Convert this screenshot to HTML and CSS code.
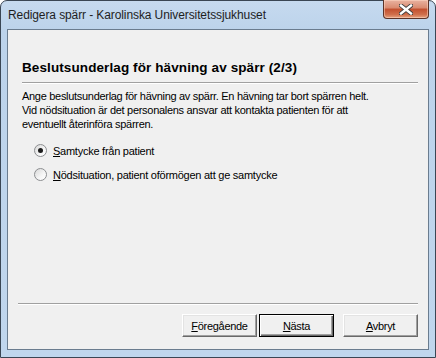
FILE: index.html
```html
<!DOCTYPE html>
<html>
<head>
  <title>Redigera spärr</title>
  <link rel="stylesheet" href="styles.css">
</head>

<body>
  <div class="window">
    <div class="titlebar">
      <span class="title">Redigera spärr - Karolinska Universitetssjukhuset</span>
      <button class="close" aria-label="Stäng">
        <svg width="14" height="11" viewBox="0 0 14 11">
          <path d="M2 1.5 L12 9.5 M12 1.5 L2 9.5" stroke="#3b3b3b" stroke-width="4.2" stroke-linecap="square"/>
          <path d="M2 1.5 L12 9.5 M12 1.5 L2 9.5" stroke="#ffffff" stroke-width="2.4" stroke-linecap="square"/>
        </svg>
      </button>
    </div>

    <div class="client">
      <div class="content">
        <h1 class="heading">Beslutsunderlag för hävning av spärr (2/3)</h1>
        <div class="rule"></div>
        <p class="intro">
          Ange beslutsunderlag för hävning av spärr. En hävning tar bort spärren helt.<br>
          Vid nödsituation är det personalens ansvar att kontakta patienten för att<br>
          eventuellt återinföra spärren.
        </p>

        <div class="options">
          <label class="option">
            <span class="radio checked"></span>
            <span><u>S</u>amtycke från patient</span>
          </label>
          <label class="option">
            <span class="radio"></span>
            <span><u>N</u>ödsituation, patient oförmögen att ge samtycke</span>
          </label>
        </div>
      </div>

      <div class="footer">
        <div class="rule"></div>
        <div class="buttons">
          <button class="btn"><u>F</u>öregående</button>
          <button class="btn default"><u>N</u>ästa</button>
          <button class="btn cancel"><u>A</u>vbryt</button>
        </div>
      </div>
    </div>
  </div>
</body>
</html>
```

FILE: styles.css
```css
body {
  margin: 0;
  font-family: 'Liberation Sans', Arial, sans-serif;
  background: #ffffff;
}
.window {
  width: 436px;
  height: 358px;
  box-sizing: border-box;
  border: 1px solid #3a4654;
  border-radius: 7px 7px 0 0;
  background: linear-gradient(#c6daef, #bcd3eb 30px, #c0d6ed);
  display: flex;
  flex-direction: column;
}
.titlebar {
  height: 28px;
  display: flex;
  align-items: flex-start;
  justify-content: space-between;
}
.title {
  font-size: 12px;
  color: #1e1e1e;
  margin: 7px 0 0 7px;
  letter-spacing: -0.1px;
}
.close {
  width: 46px;
  height: 19px;
  margin: -1px 6px 0 0;
  padding: 0;
  border: 1px solid #5b3328;
  border-top: none;
  border-radius: 0 0 4px 4px;
  background: linear-gradient(#e9b3a1, #d98a6f 45%, #c24f2e 50%, #cf6e4b 80%, #e6a280);
  box-shadow: inset 0 0 0 1px rgba(255, 220, 200, 0.5);
  display: flex;
  align-items: center;
  justify-content: center;
}
.client {
  flex: 1;
  margin: 0 6px 7px;
  border: 1px solid #6a7c8f;
  background: #f0f0f0;
  display: flex;
  flex-direction: column;
}
.content {
  flex: 1;
  padding: 30px 10px 0 14px;
}
.heading {
  font-size: 13.5px;
  font-weight: bold;
  color: #000000;
  margin: 0;
  letter-spacing: 0.1px;
  line-height: 16px;
}
.rule {
  height: 1px;
  background: #a0a0a0;
  border-bottom: 1px solid #ffffff;
}
.content .rule {
  margin-top: 6px;
}
.intro {
  font-size: 11px;
  line-height: 14px;
  color: #000000;
  margin: 5px 0 0 0;
  letter-spacing: -0.3px;
}
.options {
  display: flex;
  flex-direction: column;
  gap: 11px;
  margin: 13px 0 0 12px;
}
.option {
  display: flex;
  align-items: center;
  gap: 6px;
  font-size: 11px;
  letter-spacing: -0.25px;
  height: 13px;
}
.radio {
  width: 11px;
  height: 11px;
  border: 1px solid #8c8e91;
  border-radius: 50%;
  background: linear-gradient(135deg, #d8d8d8, #f6f6f6 60%, #ffffff);
  display: flex;
  align-items: center;
  justify-content: center;
}
.radio.checked::after {
  content: '';
  width: 5px;
  height: 5px;
  border-radius: 50%;
  background: #1c1c1c;
}
.footer {
  padding: 0 10px 12px 10px;
}
.buttons {
  display: flex;
  justify-content: flex-end;
  gap: 2px;
  margin-top: 9px;
}
.btn {
  width: 75px;
  height: 23px;
  padding: 0;
  font-family: 'Liberation Sans', Arial, sans-serif;
  font-size: 11px;
  letter-spacing: -0.3px;
  color: #000000;
  background: #f0f0f0;
  border: 1px solid;
  border-color: #ffffff #696969 #696969 #ffffff;
  box-shadow: inset -1px -1px 0 #a0a0a0, inset 1px 1px 0 #e3e3e3;
}
.btn.default {
  border: 1px solid #000000;
  box-shadow: inset 1px 1px 0 #ffffff, inset -1px -1px 0 #696969, inset -2px -2px 0 #a0a0a0;
}
.btn.cancel {
  margin-left: 7px;
}
```
